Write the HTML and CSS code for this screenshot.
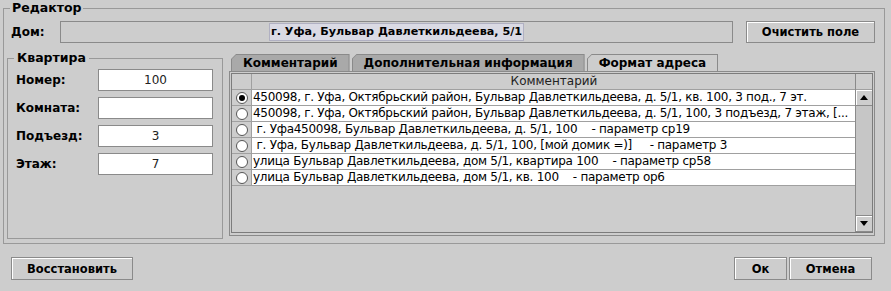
FILE: index.html
```html
<!DOCTYPE html>
<html lang="ru">
<head>
  <meta charset="UTF-8" />
  <title>Редактор</title>
  <link rel="stylesheet" href="styles.css">
</head>
<body>
  <div class="dialog">
    <fieldset class="editor">
      <legend>Редактор</legend>
      <div class="house-row">
        <label class="house-label">Дом:</label>
        <div class="house-field"><span class="house-value">г. Уфа, Бульвар Давлеткильдеева, 5/1</span></div>
        <button class="btn btn-clear">Очистить поле</button>
      </div>

      <div class="editor-body">
        <fieldset class="flat">
          <legend>Квартира</legend>
          <div class="flat-row"><label>Номер:</label><input class="field" value="100"></div>
          <div class="flat-row"><label>Комната:</label><input class="field" value=""></div>
          <div class="flat-row"><label>Подъезд:</label><input class="field" value="3"></div>
          <div class="flat-row"><label>Этаж:</label><input class="field" value="7"></div>
        </fieldset>

        <div class="tabs-area">
          <div class="tabs">
            <div class="tab"><span>Комментарий</span></div>
            <div class="tab"><span>Дополнительная информация</span></div>
            <div class="tab active"><span>Формат адреса</span></div>
          </div>
          <div class="tab-panel">
            <div class="grid">
              <div class="grid-main">
                <div class="grid-head">
                  <div class="cell-radio"></div>
                  <div class="cell-text">Комментарий</div>
                </div>
                <div class="grid-row">
                  <div class="cell-radio"><span class="radio checked"></span></div>
                  <div class="cell-text">450098, г. Уфа, Октябрьский район, Бульвар Давлеткильдеева, д. 5/1, кв. 100, 3 под., 7 эт.</div>
                </div>
                <div class="grid-row">
                  <div class="cell-radio"><span class="radio"></span></div>
                  <div class="cell-text">450098, г. Уфа, Октябрьский район, Бульвар Давлеткильдеева, д. 5/1, 100, 3 подъезд, 7 этаж, [...</div>
                </div>
                <div class="grid-row">
                  <div class="cell-radio"><span class="radio"></span></div>
                  <div class="cell-text"> г. Уфа450098, Бульвар Давлеткильдеева, д. 5/1, 100    - параметр ср19</div>
                </div>
                <div class="grid-row">
                  <div class="cell-radio"><span class="radio"></span></div>
                  <div class="cell-text"> г. Уфа, Бульвар Давлеткильдеева, д. 5/1, 100, [мой домик =)]     - параметр 3</div>
                </div>
                <div class="grid-row">
                  <div class="cell-radio"><span class="radio"></span></div>
                  <div class="cell-text">улица Бульвар Давлеткильдеева, дом 5/1, квартира 100    - параметр ср58</div>
                </div>
                <div class="grid-row">
                  <div class="cell-radio"><span class="radio"></span></div>
                  <div class="cell-text">улица Бульвар Давлеткильдеева, дом 5/1, кв. 100    - параметр ор6</div>
                </div>
              </div>
              <div class="scrollbar">
                <div class="scroll-corner"></div>
                <div class="scroll-btn">
                  <svg width="8" height="5" viewBox="0 0 8 5"><polygon points="0,5 8,5 4,0" fill="#000"/></svg>
                </div>
                <div class="scroll-track"></div>
                <div class="scroll-btn">
                  <svg width="8" height="5" viewBox="0 0 8 5"><polygon points="0,0 8,0 4,5" fill="#000"/></svg>
                </div>
              </div>
            </div>
          </div>
        </div>
      </div>
    </fieldset>

    <div class="footer">
      <button class="btn btn-restore">Восстановить</button>
      <div class="footer-right">
        <button class="btn btn-ok">Ок</button>
        <button class="btn btn-cancel">Отмена</button>
      </div>
    </div>
  </div>
</body>
</html>
```

FILE: styles.css
```css
* {
  box-sizing: border-box;
}
body {
  margin: 0;
  background: #cdcdcd;
  font-family: "DejaVu Sans", sans-serif;
  font-size: 12px;
  color: #000;
}
.dialog {
  width: 891px;
  height: 291px;
  padding-left: 3px;
}

/* fieldsets */
fieldset {
  margin: 0;
  min-width: 0;
  border: 1px solid #999;
}
legend {
  font-weight: bold;
  font-size: 12.5px;
  line-height: 16px;
  padding: 0 2px;
}
.editor {
  width: 882px;
  padding: 5px 9px 4px 3px;
}
.editor > legend {
  margin-left: 3px;
}

/* house row */
.house-row {
  display: flex;
  align-items: center;
  height: 22px;
}
.house-label {
  font-weight: bold;
  width: 49px;
  margin-left: 4px;
}
.house-field {
  flex: 1;
  height: 22px;
  border: 1px solid #8a8a8a;
  display: flex;
  align-items: center;
  justify-content: center;
}
.house-value {
  font-weight: bold;
  font-size: 11.2px;
  background: #dadae4;
  border: 1px solid #b0b0c2;
  line-height: 16px;
  padding: 0 1px;
}
.btn {
  font-family: "DejaVu Sans", sans-serif;
  font-weight: bold;
  font-size: 11.5px;
  height: 23px;
  padding: 0;
  background: #cdcdcd;
  border: 1px solid #8a8a8a;
  box-shadow: inset 1px 1px 0 #fff;
  color: #000;
}
.btn-clear {
  width: 129px;
  height: 22px;
  margin-left: 13px;
}

/* body */
.editor-body {
  display: flex;
  height: 189px;
  margin-top: 7px;
}
.flat {
  flex: none;
  width: 216px;
  padding: 3px 9px 0 8px;
}
.flat > legend {
  margin-left: -2px;
  padding: 0 3px;
}
.flat-row {
  display: flex;
  align-items: center;
  height: 22px;
  margin-bottom: 6px;
}
.flat-row label {
  font-weight: bold;
  width: 82px;
}
.field {
  width: 115px;
  height: 22px;
  border: 1px solid #8a8a8a;
  background: #fff;
  text-align: center;
  font-family: "DejaVu Sans", sans-serif;
  font-size: 12px;
  padding: 0;
  color: #222;
}

/* tabs */
.tabs-area {
  flex: 1;
  min-width: 0;
  display: flex;
  flex-direction: column;
  margin: 4px 0 3px 6px;
}
.tabs {
  display: flex;
  height: 17px;
  padding-left: 2px;
  gap: 2px;
}
.tab {
  background: #8a8a8a;
  padding: 1px 1px 0 1px;
  clip-path: polygon(0 5px, 5px 0, 100% 0, 100% 100%, 0 100%);
}
.tab span {
  display: block;
  height: 16px;
  line-height: 16px;
  padding: 0 11px;
  font-weight: bold;
  background: #a9a9a9;
  clip-path: polygon(0 4px, 4px 0, 100% 0, 100% 100%, 0 100%);
}
.tab.active span {
  background: #cdcdcd;
}
.tab-panel {
  flex: 1;
  border: 1px solid #8a8a8a;
  padding: 1px 1px 2px 1px;
}

/* grid */
.grid {
  height: 100%;
  display: flex;
  border: 1px solid #7c7c7c;
  background: #cdcdcd;
}
.grid-main {
  flex: 1;
  min-width: 0;
}
.grid-head,
.grid-row {
  display: flex;
  height: 16px;
  border-bottom: 1px solid #a0a0a0;
}
.grid-head .cell-text {
  text-align: center;
  letter-spacing: 0;
  color: #222;
}
.cell-radio {
  flex: none;
  width: 20px;
  border-right: 1px solid #a0a0a0;
  display: flex;
  align-items: center;
  justify-content: center;
}
.cell-text {
  flex: 1;
  min-width: 0;
  line-height: 15px;
  font-size: 12px;
  letter-spacing: -0.28px;
  white-space: pre;
  overflow: hidden;
  padding-left: 1px;
}
.grid-row .cell-text {
  background: #fff;
}
.radio {
  width: 12px;
  height: 12px;
  border-radius: 50%;
  border: 1px solid #555;
  background: #fff;
  display: flex;
  align-items: center;
  justify-content: center;
}
.radio.checked::after {
  content: "";
  width: 6px;
  height: 6px;
  border-radius: 50%;
  background: #000;
}

/* scrollbar */
.scrollbar {
  flex: none;
  width: 17px;
  display: flex;
  flex-direction: column;
  border-left: 1px solid #8a8a8a;
}
.scroll-corner {
  height: 16px;
  border-bottom: 1px solid #a0a0a0;
}
.scroll-btn {
  height: 16px;
  display: flex;
  align-items: center;
  justify-content: center;
  background: #cdcdcd;
  box-shadow: inset 1px 1px 0 #fff;
  border-bottom: 1px solid #8a8a8a;
}
.scroll-track {
  flex: 1;
  background: #c6c6c6;
  border-bottom: 1px solid #8a8a8a;
}

/* footer */
.footer {
  display: flex;
  justify-content: space-between;
  margin-top: 13px;
  padding: 0 19px 0 8px;
}
.btn-restore {
  width: 122px;
}
.footer-right {
  display: flex;
  gap: 2px;
}
.btn-ok {
  width: 53px;
}
.btn-cancel {
  width: 83px;
}
```
